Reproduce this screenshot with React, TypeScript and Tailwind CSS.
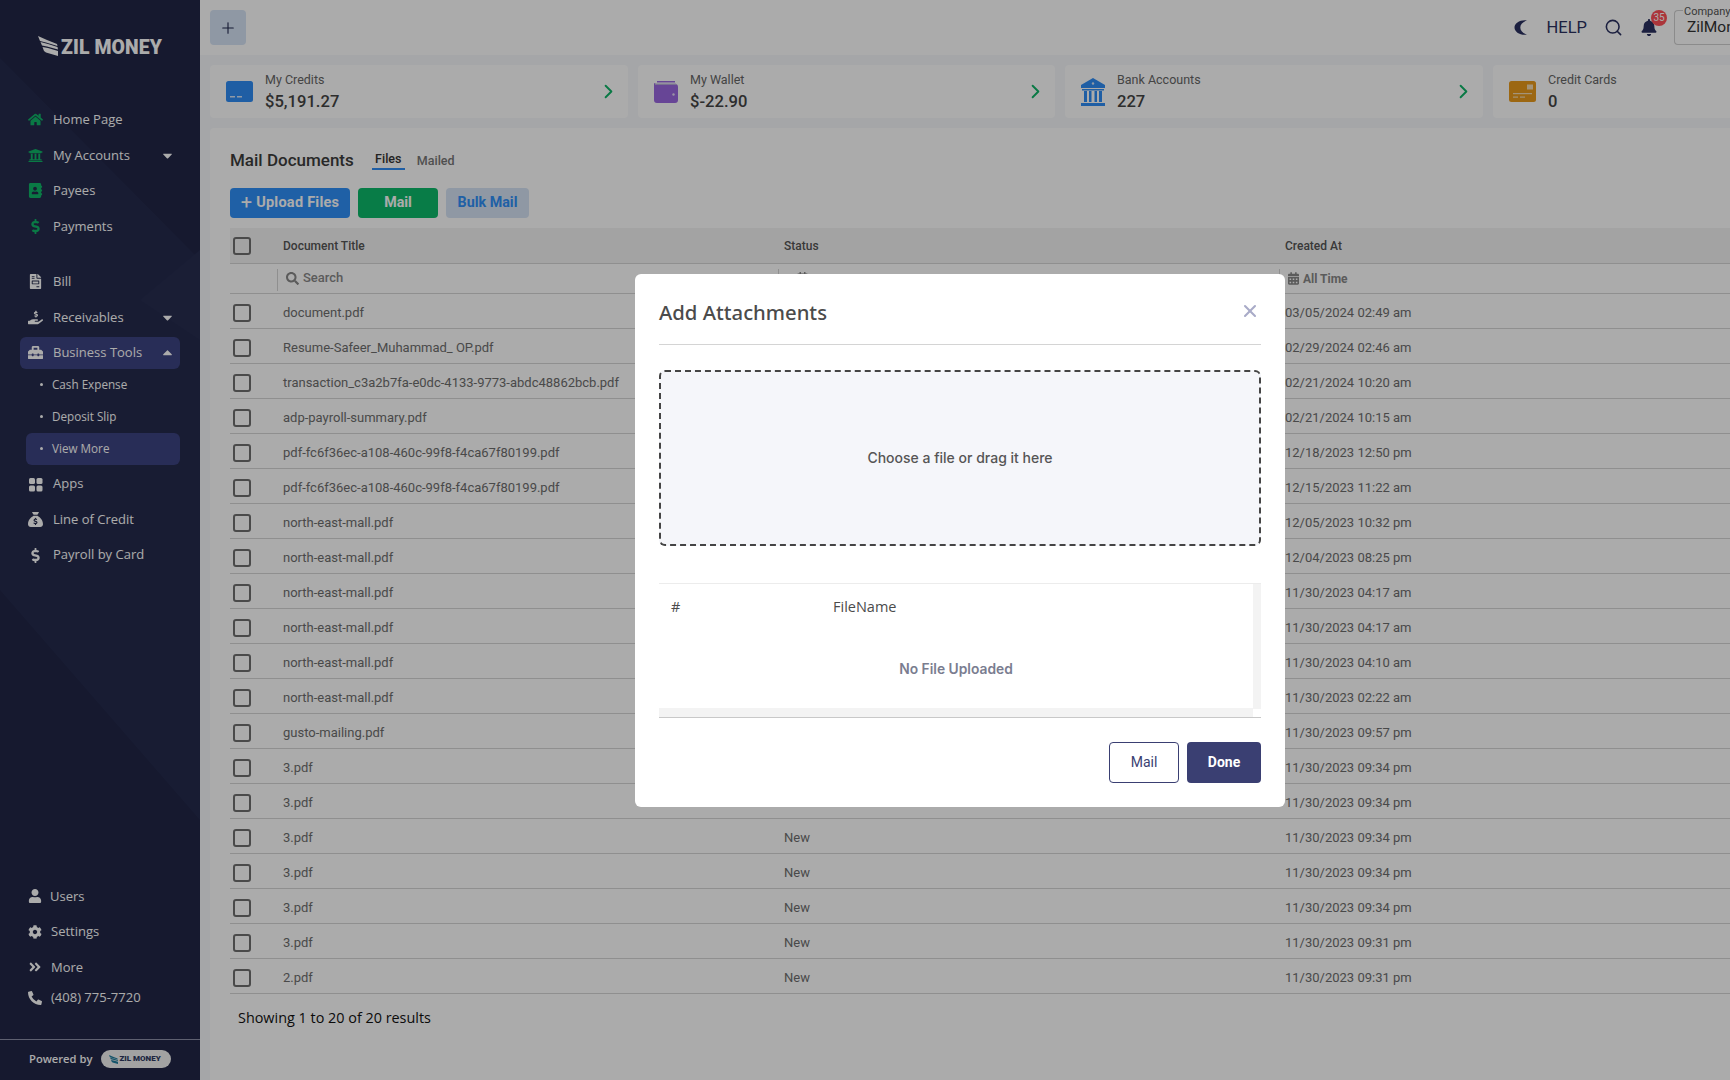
import React from 'react';
import { ChevronRight, Plus, Search, X } from 'lucide-react';
import {
  FaAddressBook,
  FaAngleDoubleRight,
  FaBell,
  FaCalendarAlt,
  FaCaretDown,
  FaCaretUp,
  FaCog,
  FaDollarSign,
  FaFileInvoice,
  FaHandHoldingUsd,
  FaHome,
  FaPhoneAlt,
  FaSearch,
  FaToolbox,
  FaUniversity,
  FaUser,
} from 'react-icons/fa';
import { FaSackDollar } from 'react-icons/fa6';

const AppsIcon = ({ className }: { className?: string }) => (
  <svg viewBox="0 0 15 15" className={className} fill="currentColor">
    <rect x="1" y="1" width="6" height="6" rx="1.5" />
    <rect x="8.5" y="1" width="6" height="6" rx="1.5" />
    <rect x="1" y="8.5" width="6" height="6" rx="1.5" />
    <rect x="8.5" y="8.5" width="6" height="6" rx="1.5" />
  </svg>
);

const topNav = [
  { icon: FaHome, label: 'Home Page', green: true },
  { icon: FaUniversity, label: 'My Accounts', green: true, caret: 'down' },
  { icon: FaAddressBook, label: 'Payees', green: true },
  { icon: FaDollarSign, label: 'Payments', green: true },
];

const bottomNav = [
  { icon: FaUser, label: 'Users', textClass: 'ml-[8px]' },
  { icon: FaCog, label: 'Settings', textClass: 'ml-[9px]' },
  { icon: FaAngleDoubleRight, label: 'More', textClass: 'ml-[9px]' },
];

const documents = [
  ['document.pdf', '03/05/2024 02:49 am'],
  ['Resume-Safeer_Muhammad_ OP.pdf', '02/29/2024 02:46 am'],
  ['transaction_c3a2b7fa-e0dc-4133-9773-abdc48862bcb.pdf', '02/21/2024 10:20 am'],
  ['adp-payroll-summary.pdf', '02/21/2024 10:15 am'],
  ['pdf-fc6f36ec-a108-460c-99f8-f4ca67f80199.pdf', '12/18/2023 12:50 pm'],
  ['pdf-fc6f36ec-a108-460c-99f8-f4ca67f80199.pdf', '12/15/2023 11:22 am'],
  ['north-east-mall.pdf', '12/05/2023 10:32 pm'],
  ['north-east-mall.pdf', '12/04/2023 08:25 pm'],
  ['north-east-mall.pdf', '11/30/2023 04:17 am'],
  ['north-east-mall.pdf', '11/30/2023 04:17 am'],
  ['north-east-mall.pdf', '11/30/2023 04:10 am'],
  ['north-east-mall.pdf', '11/30/2023 02:22 am'],
  ['gusto-mailing.pdf', '11/30/2023 09:57 pm'],
  ['3.pdf', '11/30/2023 09:34 pm'],
  ['3.pdf', '11/30/2023 09:34 pm'],
  ['3.pdf', '11/30/2023 09:34 pm'],
  ['3.pdf', '11/30/2023 09:34 pm'],
  ['3.pdf', '11/30/2023 09:34 pm'],
  ['3.pdf', '11/30/2023 09:31 pm'],
  ['2.pdf', '11/30/2023 09:31 pm'],
];

const Wings = ({ className, color }: { className: string; color: string }) => (
  <svg viewBox="0 0 20 20" className={className} fill={color}>
    <path d="M0 0 L9 4 L19 8 L19.5 10 L8 6.5 L2 5 Z" />
    <path d="M2.5 6 L10 8 L19.5 11 L20 13.5 L9 10.5 L4 9.5 Z" />
    <path d="M4.5 11 L10 12 L20 15 L20 20 L8 16.5 L6 15 Z" />
  </svg>
);

const CreditIcon = () => (
  <svg viewBox="0 0 27 21" className="w-[27px] h-[21px]">
    <rect width="27" height="21" rx="2.5" fill="#2f8cf5" />
    <rect x="4" y="15" width="5" height="1.5" fill="#d7e6f8" />
    <rect x="11" y="15" width="5" height="1.5" fill="#d7e6f8" />
  </svg>
);

const WalletIcon = () => (
  <svg viewBox="0 0 24 22" className="w-6 h-[22px]">
    <path d="M3 0 H21 V1.5 H3 Z" fill="#9a67e0" />
    <path d="M2 3 H21 A3 3 0 0 1 24 6 V19 A3 3 0 0 1 21 22 H3 A3 3 0 0 1 0 19 V2 Z" fill="#9a67e0" />
    <rect x="1" y="2.5" width="21" height="1.4" fill="#b9b1d6" />
    <circle cx="19.5" cy="13.5" r="1.2" fill="#e5dcf5" />
  </svg>
);

const BankIcon = () => (
  <svg viewBox="0 0 24 28" className="w-6 h-7" fill="#2f8cf5">
    <path d="M12 0 L24 7 V10 H0 V7 Z" />
    <rect x="1" y="11" width="22" height="1.5" />
    <rect x="3" y="13" width="3" height="11" />
    <rect x="8" y="13" width="2.5" height="11" />
    <rect x="13.5" y="13" width="2.5" height="11" />
    <rect x="18" y="13" width="3" height="11" />
    <rect y="25" width="24" height="3" />
    <circle cx="12" cy="5.5" r="1.2" fill="#d7e6f8" />
  </svg>
);

const CardIcon = () => (
  <svg viewBox="0 0 27 21" className="w-[27px] h-[21px]">
    <rect width="27" height="21" rx="2.5" fill="#e99a1c" />
    <rect x="18" y="3.5" width="6" height="5" fill="#f3dcb3" />
    <rect x="4" y="12" width="19" height="1.2" fill="#f3dcb3" />
    <rect x="4" y="15.5" width="5" height="1.2" fill="#f3dcb3" />
    <rect x="11" y="15.5" width="5" height="1.2" fill="#f3dcb3" />
  </svg>
);

const MoonIcon = () => (
  <svg viewBox="0 0 14 15" className="w-[14px] h-[15px]" fill="currentColor">
    <path d="M13 0.3 C6 -0.6 0.5 3 0.5 7.5 C0.5 12 6 15.6 13 14.7 C8.5 13 6.3 10.5 6.3 7.5 C6.3 4.5 8.5 2 13 0.3 Z" />
  </svg>
);

const stats = [
  { icon: CreditIcon, label: 'My Credits', value: '$5,191.27', width: 'w-[418px]', iconBox: 'w-[27px] ml-4' },
  { icon: WalletIcon, label: 'My Wallet', value: '$-22.90', width: 'w-[417px]', iconBox: 'w-6 ml-4' },
  { icon: BankIcon, label: 'Bank Accounts', value: '227', width: 'w-[418px]', iconBox: 'w-6 ml-4' },
  { icon: CardIcon, label: 'Credit Cards', value: '0', width: 'w-[418px]', iconBox: 'w-[27px] ml-4' },
];

const NavItem = ({ icon: Icon, label, green, caret, active }: any) => (
  <div
    className={`flex items-center pl-[8px] pr-[5px] rounded-md text-[13px] text-white ${
      active ? 'bg-[#3d4382] h-8 mt-[1.75px]' : 'h-[35.5px]'
    }`}
  >
    <span className={`w-[25px] flex justify-start ${green ? 'text-[#0fb568]' : 'text-white'}`}>
      <Icon className="w-[15px] h-[15px]" />
    </span>
    <span>{label}</span>
    {caret === 'down' && <FaCaretDown className="ml-auto w-[15px] h-[15px]" />}
    {caret === 'up' && <FaCaretUp className="ml-auto w-[15px] h-[15px]" />}
  </div>
);

const SubItem = ({ label, active }: { label: string; active?: boolean }) => (
  <div
    className={`flex items-center h-8 ml-[6px] pl-[14px] rounded-md text-[11.7px] text-white ${
      active ? 'bg-[#3d4382]' : ''
    }`}
  >
    <span className="w-[3px] h-[3px] rounded-full bg-white mr-[9px]" />
    {label}
  </div>
);

const Sidebar = () => (
  <aside className="relative w-[200px] shrink-0 h-full flex flex-col bg-[#212647] font-['Open_Sans',sans-serif] overflow-hidden">
    <svg className="absolute inset-0 w-full h-full" viewBox="0 0 200 1080" preserveAspectRatio="none">
      <polygon points="0,58 200,260 200,820 0,590" fill="#252b4d" />
      <polygon points="200,250 140,300 200,340" fill="#272d50" />
    </svg>
    <div className="relative flex flex-col h-full">
      <div className="flex items-center h-[102px] pl-[38px] pb-[6px]">
        <Wings className="w-5 h-5 -mt-[4px]" color="#ffffff" />
        <span className="ml-[3px] text-[19.4px] leading-none font-black text-white font-['Roboto',sans-serif] tracking-[0.1px]">
          ZIL MONEY
        </span>
      </div>

      <nav className="pl-5 pr-5">
        {topNav.map((item) => (
          <NavItem key={item.label} {...item} />
        ))}
        <div className="h-5" />
        <NavItem icon={FaFileInvoice} label="Bill" />
        <NavItem icon={FaHandHoldingUsd} label="Receivables" caret="down" />
        <NavItem icon={FaToolbox} label="Business Tools" caret="up" active />
        <SubItem label="Cash Expense" />
        <SubItem label="Deposit Slip" />
        <SubItem label="View More" active />
        <div className="h-[1.5px]" />
        <NavItem icon={AppsIcon} label="Apps" />
        <NavItem icon={FaSackDollar} label="Line of Credit" />
        <NavItem icon={FaDollarSign} label="Payroll by Card" />
      </nav>

      <div className="mt-auto pl-7 text-[13px] text-white">
        {bottomNav.map((item) => (
          <div key={item.label} className="flex items-center h-[35.5px]">
            <item.icon className="w-[14px] h-[14px]" />
            <span className={item.textClass}>{item.label}</span>
          </div>
        ))}
        <div className="flex items-center h-[26px]">
          <FaPhoneAlt className="w-[14px] h-[14px]" />
          <span className="ml-[9px]">(408) 775-7720</span>
        </div>
      </div>

      <div className="mt-[28px] h-[41px] pb-[2px] shrink-0 border-t border-[#8d90a8] flex items-center pl-[29px] text-[11.2px] font-semibold text-white">
        Powered by
        <span className="ml-[9px] flex items-center h-[18px] w-[70px] rounded-full bg-[#f2f2f2] pl-[8px]">
          <Wings className="w-[9px] h-[9px]" color="#1f7d9e" />
          <span className="ml-[1px] text-[8px] font-black leading-none text-[#2f3a62] font-['Roboto',sans-serif]">
            ZIL MONEY
          </span>
        </span>
      </div>
    </div>
  </aside>
);

const TopBar = () => (
  <header className="h-[55px] bg-white flex items-center pl-[10px] font-['Roboto',sans-serif]">
    <button className="w-9 h-[35px] rounded bg-[#d5e3f5] flex items-center justify-center text-[#21274d]">
      <Plus className="w-[18px] h-[18px]" strokeWidth={1.5} />
    </button>
    <div className="ml-auto flex items-center text-[#2b3160]">
      <MoonIcon />
      <span className="ml-[19px] mt-[2px] text-[16.5px]">HELP</span>
      <Search className="ml-[17px] w-[19px] h-[19px]" strokeWidth={2} />
      <div className="relative ml-[18px] w-[17px]">
        <FaBell className="w-[16px] h-[17px]" />
        <span className="absolute -top-[9px] left-[10px] w-4 h-4 rounded-full bg-[#ff5058] text-[10px] leading-4 text-center text-white">
          35
        </span>
      </div>
      <div className="relative ml-[16px] w-[56px] h-[35px] border border-[#cfcfcf] rounded-bl-[4px] rounded-tl-[4px] border-r-0">
        <span className="absolute -top-[6px] left-2 px-[1px] bg-white text-[11px] leading-[13px] text-[#555]">Company</span>
        <span className="absolute top-[7px] left-3 text-[15.5px] leading-[18px] text-[#333] whitespace-nowrap">ZilMoney</span>
      </div>
    </div>
  </header>
);

const Checkbox = () => <span className="block w-[18px] h-[18px] border-2 border-[#6f6f6f] rounded-[3px]" />;

const MailDocuments = () => (
  <section className="mt-[10px] ml-[10px] w-[1600px] flex-1 rounded-t bg-white px-5 font-['Roboto',sans-serif]">
    <div className="flex items-center h-[60px] pt-[6px]">
      <h1 className="text-[17px] font-medium text-[#3d3d3d]">Mail Documents</h1>
      <div className="ml-[18px] w-[33px] h-[18px] border-b-2 border-[#2f8cf5] text-center text-[12.5px] leading-[14px] font-medium text-[#333]">
        Files
      </div>
      <div className="ml-3 text-[12.5px] font-medium text-[#777]">Mailed</div>
    </div>

    <div className="flex gap-2 mt-0 h-[30px]">
      <button className="w-[120px] rounded bg-[#2f8ff8] text-white text-[14.5px] font-bold tracking-[0.25px]">
        <span className="font-normal text-[20px] leading-none align-[-2px]">+</span> Upload Files
      </button>
      <button className="w-20 rounded bg-[#0cba6a] text-white text-[14.3px] font-bold">Mail</button>
      <button className="w-[83px] rounded bg-[#d5e3f5] text-[#2f8ff8] text-[14.3px] font-bold">Bulk Mail</button>
    </div>

    <table className="mt-[10px] w-[1530px] table-fixed border-collapse text-[13px] text-[#6e6e6e]">
      <colgroup>
        <col className="w-[53px]" />
        <col className="w-[501px]" />
        <col className="w-[501px]" />
        <col />
      </colgroup>
      <thead>
        <tr className="h-[35px] bg-[#f4f4f4] text-left text-[12px] font-medium text-[#555] border-b border-[#d5d5d5]">
          <th className="pl-[3px] pt-[2px]">
            <Checkbox />
          </th>
          <th className="font-medium pt-[2px]">Document Title</th>
          <th className="font-medium pt-[2px]">Status</th>
          <th className="font-medium pt-[2px]">Created At</th>
        </tr>
        <tr className="h-[30px] border-b border-[#d5d5d5]">
          <th className="relative">
            <span className="absolute right-[5px] top-[5px] h-[22px] border-r border-[#d5d5d5]" />
          </th>
          <th className="pl-[3px] text-left font-medium text-[#888]">
            <span className="flex items-center gap-[4px]">
              <FaSearch className="w-[13px] h-[13px]" />
              Search
            </span>
          </th>
          <th className="relative pl-[13px] text-left text-[#888]">
            <span className="absolute -left-[6px] top-[5px] h-[22px] border-r border-[#d5d5d5]" />
            <FaCalendarAlt className="w-[11px] h-[12px]" />
          </th>
          <th className="relative pl-[3px] pt-[1px] text-left text-[12px] font-bold text-[#888]">
            <span className="absolute -left-[6px] top-[5px] h-[22px] border-r border-[#d5d5d5]" />
            <span className="flex items-center gap-[4px]">
              <FaCalendarAlt className="w-[11px] h-[13px]" />
              All Time
            </span>
          </th>
        </tr>
      </thead>
      <tbody>
        {documents.map(([name, created], index) => (
          <tr key={index} className="h-[35px] border-b border-[#d5d5d5]">
            <td className="pl-[3px] pt-[4px]">
              <Checkbox />
            </td>
            <td className="pt-[5px]">{name}</td>
            <td className="pt-[5px]">New</td>
            <td className="pt-[5px]">{created}</td>
          </tr>
        ))}
      </tbody>
    </table>

    <p className="mt-[13px] pl-2 font-['Open_Sans',sans-serif] text-[14.4px] text-[#111]">Showing 1 to 20 of 20 results</p>
  </section>
);

const AttachmentsModal = () => (
  <div className="absolute left-[635px] top-[274px] w-[650px] h-[533px] rounded-md bg-white px-6 font-['Open_Sans',sans-serif]">
    <div className="flex items-center justify-between h-[71px] pt-[7px] border-b border-[#d4d4d4]">
      <h2 className="font-['Noto_Sans',sans-serif] text-[20.3px] font-medium text-[#4b4b4b]">Add Attachments</h2>
      <X className="w-5 h-5 -mt-[3px] mr-px text-[#a9abc8]" strokeWidth={2.5} />
    </div>

    <div className="mt-[25px] h-[176px] pb-[2px] flex items-center justify-center rounded-md border-2 border-dashed border-[#444] bg-[#f5f6fa] font-['Inter',sans-serif] text-[14px] font-medium text-[#555]">
      Choose a file or drag it here
    </div>

    <div className="relative mt-[37px] h-[134px] border-t border-[#ececec] border-b-0">
      <div className="flex h-[46px] items-center text-[14.5px] font-medium text-[#4b4b4b]">
        <span className="w-[174px] pl-3">#</span>
        <span>FileName</span>
      </div>
      <p className="mt-[29px] pr-2 text-center font-['Inter',sans-serif] text-[13.8px] font-semibold text-[#7a7d90]">No File Uploaded</p>
      <div className="absolute right-0 top-0 w-2 h-[125px] bg-[#f3f3f3]" />
      <div className="absolute left-0 right-2 bottom-0 h-[9px] bg-[#f3f3f3]" />
    </div>

    <div className="border-t border-[#c8c8c8] pt-6 flex justify-end gap-2 font-['Roboto',sans-serif] text-[14px]">
      <button className="w-[70px] h-[41px] rounded-[4px] border border-[#3a3f72] text-[#3a3f72]">Mail</button>
      <button className="w-[74px] h-[41px] rounded-[4px] bg-[#3a3f72] font-bold text-white">Done</button>
    </div>
  </div>
);

const App = () => {
  return (
    <div className="relative flex w-screen h-screen overflow-hidden bg-[#f6f8fb]">
      <Sidebar />
      <main className="flex-1 min-w-0 flex flex-col">
        <TopBar />
        <div className="flex gap-[10px] pl-[10px] mt-[10px] font-['Roboto',sans-serif]">
          {stats.map((stat) => (
            <div key={stat.label} className={`${stat.width} shrink-0 h-[53px] flex items-center rounded bg-white`}>
              <div className={`${stat.iconBox} shrink-0 flex justify-center`}>
                <stat.icon />
              </div>
              <div className="ml-3 flex flex-col mt-[2px]">
                <span className="text-[12.5px] leading-[15px] text-[#666]">{stat.label}</span>
                <span className="text-[16.6px] leading-[22px] font-medium text-[#444] mt-1">{stat.value}</span>
              </div>
              <ChevronRight className="ml-auto mr-[8px] w-[23px] h-[23px] text-[#0fb568]" strokeWidth={2} />
            </div>
          ))}
        </div>
        <MailDocuments />
      </main>
      <div className="absolute inset-0 bg-black/33" />
      <AttachmentsModal />
    </div>
  );
};

export default App;
